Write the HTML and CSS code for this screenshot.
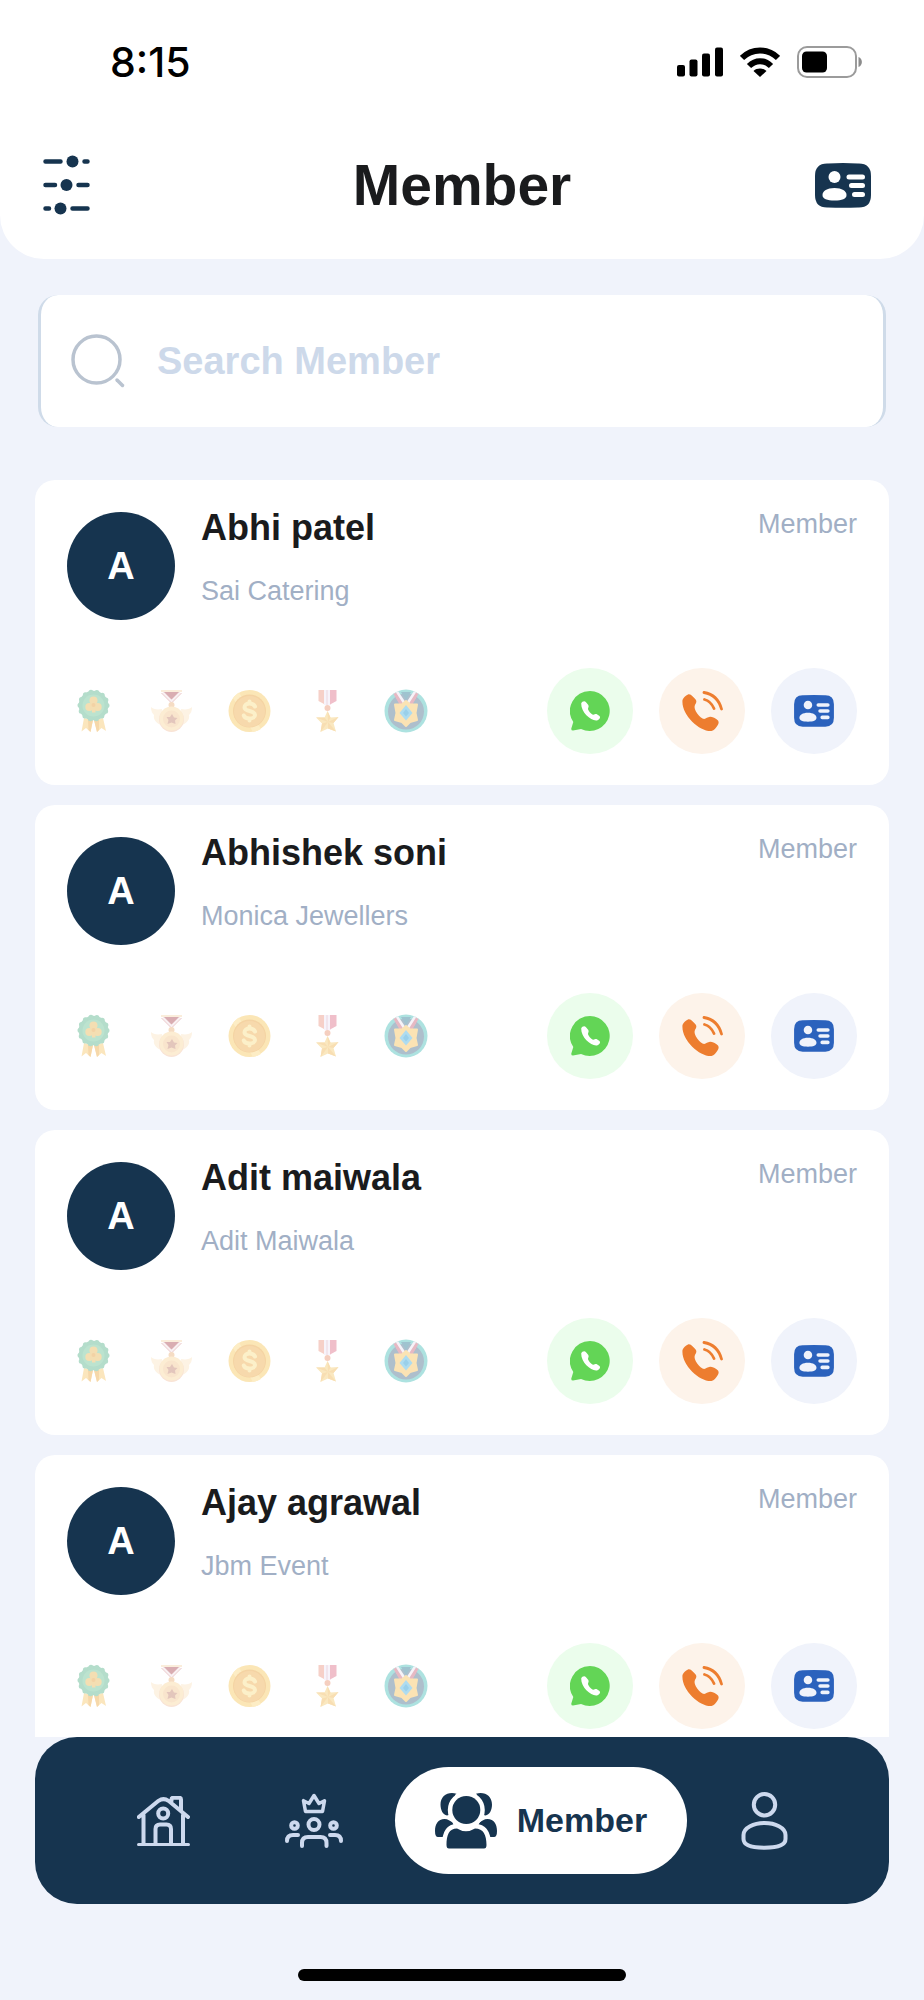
FILE: index.html
```html
<!DOCTYPE html>
<html lang="en">
<head>
<meta charset="utf-8">
<meta name="viewport" content="width=device-width, initial-scale=1">
<title>Member</title>
<link rel="stylesheet" href="styles.css">
</head>
<body>
<svg class="sprite" aria-hidden="true">
  <symbol id="id-card" viewBox="0 0 56 45">
    <path fill="currentColor" d="M13 0.500Q28 -0.500 43 0.500Q56 0 56 13V32Q56 45 43 44.500Q28 45 13 44.500Q0 45 0 32V13Q0 0 13 0.500Z"/>
    <circle class="cut" cx="19.500" cy="14" r="6"/>
    <path class="cut" d="M19.500 25C27 25 31.500 28 31.500 32S27 37.500 19.500 37.500S7.500 36 7.500 32S12 25 19.500 25Z"/>
    <path class="cut-line" d="M34 14H47.500M36.500 22.500H47.500M39.500 31.500H47.500"/>
  </symbol>
  <symbol id="badge-clover" viewBox="0 0 44 44">
    <path fill="#fbe6bd" d="M12 29L9.500 42.500L14 39L18.500 43L21 31ZM31 29L34 42L29.500 39L25 43L22 31Z"/>
    <path fill="#f6d8aa" d="M16 31L21 31L18.500 43L16.500 41ZM27 31L22 31L25 43L27 41Z"/>
    <circle cx="21.500" cy="16.500" r="14.800" fill="#b4ddcb"/>
    <circle cx="21.500" cy="16.500" r="13.500" fill="none" stroke="#b4ddcb" stroke-width="5" stroke-linecap="round" stroke-dasharray="0 6.059"/>
    <circle cx="21.500" cy="16.500" r="11" fill="#bce3cf"/>
    <g fill="#f4deb2"><circle cx="21.500" cy="11.500" r="4"/><circle cx="17.300" cy="18" r="4"/><circle cx="25.700" cy="18" r="4"/><path d="M20 14H23L23.500 23.500H20Z"/></g>
    <circle cx="21.500" cy="16" r="2" fill="#f3d2a5"/>
  </symbol>
  <symbol id="badge-wings" viewBox="0 0 44 44">
    <path fill="#fdf3e4" d="M12 20C7 21 3 20 1 18C1 22 2 24 4 26C3 30 6 34 11 36ZM31 20C36 21 40 20 42 18C42 22 41 24 39 26C40 30 37 34 32 36Z"/>
    <path fill="#faeddb" d="M11 1H32V3H11Z"/>
    <path fill="#d9adb2" d="M13 3H30L21.500 13Z"/>
    <path fill="none" stroke="#f9f1f3" stroke-width="2" d="M13 3.500L21.500 12L30 3.500"/>
    <path fill="none" stroke="#e9c6c8" stroke-width="1" d="M11.500 4L21.500 14L31.500 4"/>
    <circle cx="21.500" cy="16" r="3" fill="#f5dcc4"/>
    <circle cx="21.500" cy="30.500" r="12.500" fill="#f9e4d6"/>
    <circle cx="21.500" cy="29.500" r="12" fill="#fcedd3"/>
    <circle cx="21.500" cy="30" r="8.500" fill="#f9e5cd"/>
    <path fill="#e3c6bc" d="M22 25L24 28.500L27.500 29L25 31.500L25.500 35L21.500 33.500L17.500 35L18.500 31L16.500 28L20 28Z"/>
  </symbol>
  <symbol id="badge-coin" viewBox="0 0 44 44">
    <circle cx="21.500" cy="22" r="21" fill="#fbe6b6"/>
    <path fill="#fdedc5" d="M5 9A21 21 0 0 1 11 3.500L33 40A21 21 0 0 1 25 43Z"/>
    <circle cx="21.500" cy="22" r="16.500" fill="#f4d3a3"/>
    <circle cx="21.500" cy="22.500" r="15.500" fill="#f7d9ac"/>
    <path fill="none" stroke="#fcf0c9" stroke-width="4" stroke-linecap="round" stroke-linejoin="round" d="M27 17.500C26 15.500 24 14.500 21.500 14.500C18.500 14.500 16.500 16 16.500 18.200C16.500 20.500 18.500 21.300 21.500 22C24.500 22.700 27 23.500 27 26C27 28.300 24.500 29.500 21.500 29.500C18.500 29.500 16.500 28.500 15.800 26.500M21.500 12.500V14M21.500 30V31.500"/>
  </symbol>
  <symbol id="badge-star" viewBox="0 0 44 44">
    <path fill="#f6d0c8" d="M12.500 1H18V15L12.500 12Z"/>
    <path fill="#f7f3fa" d="M18 1H25V16H18Z"/>
    <path fill="#f0bfca" d="M24 1H30.500V12L24 15.500Z"/>
    <path fill="#ecd8e0" d="M20.500 1H21.500V16H20.500Z"/>
    <circle cx="21.500" cy="19" r="3" fill="#f5cfc0"/>
    <path fill="#fae8c0" d="M21.500 22L24.500 28.500L32.500 28L27.500 34L30 42.500L22 39.500L14.500 43L16 34.500L10 28.500L18.500 28.500Z"/>
    <path fill="#f8deb2" d="M21.500 22L24.500 28.500L22 33ZM32.500 28L27.500 34L22 33ZM30 42.500L22 39.500V33ZM14.500 43L16 34.500L22 33ZM10 28.500L18.500 28.500L22 33Z"/>
  </symbol>
  <symbol id="badge-gem" viewBox="0 0 44 44">
    <circle cx="22" cy="22" r="21.500" fill="#ade2e0"/>
    <circle cx="22" cy="22.500" r="18" fill="#aebfcc"/>
    <path fill="#f6f3f8" d="M10 5L14 2L22 14L18 18ZM34 5L30 2L22 14L26 18Z"/>
    <path fill="#e6b9c3" d="M9.500 5L12 3.500L20 16L17 18ZM34.500 5L32 3.500L24 16L27 18Z"/>
    <path fill="#9fc3cf" d="M17 3H27L22 11Z"/>
    <path fill="#fbe3b4" stroke="#fbe3b4" stroke-width="2" stroke-linejoin="round" d="M22 12L26 15.500L33 15.500L31.500 24L33 31L26 33L22 37L18 33L11 31L12.500 24L11 15.500L18 15.500Z"/>
    <path fill="#aedcf0" d="M22 16L28.500 24L22 31.500L15.500 24Z"/>
    <path fill="#9ad0ea" d="M22 20L25 24L22 27.500L19 24Z"/>
  </symbol>
  <symbol id="whatsapp" viewBox="0 0 40 40">
    <path fill="#63d556" d="M20 0A20 20 0 1 1 11 38L3 39.500Q1 39.500 1.300 37.500L3.300 31A20 20 0 0 1 20 0Z"/>
    <path fill="#fff" d="M11.200 12.500C12 10.500 14.500 9.500 16 11.200L18.300 14C19.300 15.800 17.800 16.800 18 18.300C18.800 20.500 20.500 22.300 22.500 23.500C24 24.200 25 22.800 26.500 23L29.500 25C31 26.800 29 28.500 27.500 29.200C22 30.800 11 22 11.200 12.500Z"/>
  </symbol>
  <symbol id="phone" viewBox="0 0 41 41">
    <path fill="#ed7d2f" d="M0.500 9C1.500 6.500 3.500 4.500 6 3.500C8 3 9 4 10.500 5.200L13 7.700C15 9.700 14.500 11.500 13.300 13.300C12 15.500 12.500 18 13.800 20.300C15.500 23.500 18 26 20.500 27.500C23.500 29 25 26 28 25.800C30 25.700 34 27.500 36 29.500C37 30.800 36.800 33 35.500 34.500C34 37 32 39.500 29.500 40C18 41 -1 24 0.500 9Z"/>
    <path fill="none" stroke="#ed7d2f" stroke-width="2.800" stroke-linecap="round" d="M22 1.500C31 3 37 9 39.500 18M22.500 8.500C27 9.500 30 13 32 17.500"/>
  </symbol>
</svg>

<div class="app">
  <header class="header">
    <div class="status">
      <time class="clock">8:15</time>
      <div class="status-icons">
        <svg width="46" height="30" viewBox="0 0 46 30" aria-hidden="true"><rect x="0" y="18" width="8" height="11.500" rx="2"/><rect x="12.500" y="12.500" width="8" height="17" rx="2"/><rect x="25" y="6.500" width="8" height="23" rx="2"/><rect x="38" y="0.500" width="8" height="29" rx="2"/></svg>
        <svg width="40" height="30" viewBox="0 0 40 30" aria-hidden="true"><g fill="none" stroke="#000" stroke-width="6"><path d="M2 11C12 1 28 1 38 11"/><path d="M9 19C15.500 12.500 24.500 12.500 31 19"/></g><path d="M13.500 24C17 20.800 23 20.800 26.500 24L20 30Z"/></svg>
        <svg width="66" height="32" viewBox="0 0 66 32" aria-hidden="true"><rect x="1" y="1" width="58" height="30" rx="9" fill="none" stroke="#9b9b9b" stroke-width="2"/><rect x="5" y="5.500" width="25" height="21" rx="4.500"/><path fill="#8c8c8c" d="M61.500 11C66 12.500 66 19.500 61.500 21Z"/></svg>
      </div>
    </div>
    <div class="titlebar">
      <button class="icon-btn" type="button" aria-label="Filters">
        <svg width="47" height="60" viewBox="0 0 47 60"><g fill="currentColor"><circle cx="29.500" cy="6.500" r="6"/><circle cx="23.500" cy="30" r="6"/><circle cx="17.500" cy="53.500" r="6"/></g><path fill="none" stroke="currentColor" stroke-width="4.500" stroke-linecap="round" d="M2.500 6.500H17.500M41.500 6.500H44.500M2.500 30H12M35.500 30H44.500M2.500 53.500H6M29.500 53.500H44.500"/></svg>
      </button>
      <h1 class="title">Member</h1>
      <button class="icon-btn" type="button" aria-label="My card">
        <svg width="56" height="45"><use href="#id-card"/></svg>
      </button>
    </div>
  </header>

  <label class="search">
    <svg width="54" height="54" viewBox="0 0 54 54" aria-hidden="true"><g fill="none" stroke="#b9c3d0" stroke-linecap="round"><circle cx="25.500" cy="25.500" r="23.500" stroke-width="3.500"/><path stroke-width="3.500" d="M46 46L51.500 51.500"/></g></svg>
    <input type="search" placeholder="Search Member" aria-label="Search Member">
  </label>

  <main class="list">
    <article class="card">
      <div class="card-top">
        <div class="avatar">A</div>
        <div class="who"><h2 class="name">Abhi patel</h2><p class="company">Sai Catering</p></div>
        <span class="role">Member</span>
      </div>
      <div class="card-bottom">
        <div class="badges"><svg><use href="#badge-clover"/></svg><svg><use href="#badge-wings"/></svg><svg><use href="#badge-coin"/></svg><svg><use href="#badge-star"/></svg><svg><use href="#badge-gem"/></svg></div>
        <div class="actions">
          <button class="action chat" type="button" aria-label="WhatsApp"><svg width="40" height="40"><use href="#whatsapp"/></svg></button>
          <button class="action call" type="button" aria-label="Call"><svg width="41" height="41"><use href="#phone"/></svg></button>
          <button class="action view" type="button" aria-label="View card"><svg width="40" height="32"><use href="#id-card"/></svg></button>
        </div>
      </div>
    </article>
    <article class="card">
      <div class="card-top">
        <div class="avatar">A</div>
        <div class="who"><h2 class="name">Abhishek soni</h2><p class="company">Monica Jewellers</p></div>
        <span class="role">Member</span>
      </div>
      <div class="card-bottom">
        <div class="badges"><svg><use href="#badge-clover"/></svg><svg><use href="#badge-wings"/></svg><svg><use href="#badge-coin"/></svg><svg><use href="#badge-star"/></svg><svg><use href="#badge-gem"/></svg></div>
        <div class="actions">
          <button class="action chat" type="button" aria-label="WhatsApp"><svg width="40" height="40"><use href="#whatsapp"/></svg></button>
          <button class="action call" type="button" aria-label="Call"><svg width="41" height="41"><use href="#phone"/></svg></button>
          <button class="action view" type="button" aria-label="View card"><svg width="40" height="32"><use href="#id-card"/></svg></button>
        </div>
      </div>
    </article>
    <article class="card">
      <div class="card-top">
        <div class="avatar">A</div>
        <div class="who"><h2 class="name">Adit maiwala</h2><p class="company">Adit Maiwala</p></div>
        <span class="role">Member</span>
      </div>
      <div class="card-bottom">
        <div class="badges"><svg><use href="#badge-clover"/></svg><svg><use href="#badge-wings"/></svg><svg><use href="#badge-coin"/></svg><svg><use href="#badge-star"/></svg><svg><use href="#badge-gem"/></svg></div>
        <div class="actions">
          <button class="action chat" type="button" aria-label="WhatsApp"><svg width="40" height="40"><use href="#whatsapp"/></svg></button>
          <button class="action call" type="button" aria-label="Call"><svg width="41" height="41"><use href="#phone"/></svg></button>
          <button class="action view" type="button" aria-label="View card"><svg width="40" height="32"><use href="#id-card"/></svg></button>
        </div>
      </div>
    </article>
    <article class="card">
      <div class="card-top">
        <div class="avatar">A</div>
        <div class="who"><h2 class="name">Ajay agrawal</h2><p class="company">Jbm Event</p></div>
        <span class="role">Member</span>
      </div>
      <div class="card-bottom">
        <div class="badges"><svg><use href="#badge-clover"/></svg><svg><use href="#badge-wings"/></svg><svg><use href="#badge-coin"/></svg><svg><use href="#badge-star"/></svg><svg><use href="#badge-gem"/></svg></div>
        <div class="actions">
          <button class="action chat" type="button" aria-label="WhatsApp"><svg width="40" height="40"><use href="#whatsapp"/></svg></button>
          <button class="action call" type="button" aria-label="Call"><svg width="41" height="41"><use href="#phone"/></svg></button>
          <button class="action view" type="button" aria-label="View card"><svg width="40" height="32"><use href="#id-card"/></svg></button>
        </div>
      </div>
    </article>
  </main>

  <nav class="nav">
    <a class="nav-item" href="#home" aria-label="Home">
      <svg width="53" height="50" viewBox="0 0 53 50"><g fill="none" stroke="currentColor" stroke-width="4" stroke-linecap="round" stroke-linejoin="round"><path stroke-width="3" d="M1.500 48.500H51.500"/><path d="M6.500 19V48M46 19V48M1.800 21L21.500 4.800Q26.500 1.500 31.500 4.800L51 21M34.500 5V3.500Q34.500 1.700 36.500 1.700H42Q44 1.700 44 3.500V14M18.500 48V33Q18.500 28.500 23 28.500H29.500Q34 28.500 34 33V48"/><circle cx="26.200" cy="17.500" r="5"/></g></svg>
    </a>
    <a class="nav-item" href="#leaders" aria-label="Leaders">
      <svg width="58" height="55" viewBox="0 0 58 55"><g fill="none" stroke="currentColor" stroke-width="4" stroke-linecap="round" stroke-linejoin="round"><path stroke-width="3.500" d="M18.500 7.700L20.500 18.500H37.500L39.500 7.700L34 10.500L29 2.500L24 10.500Z"/><circle cx="29" cy="31.500" r="5.500"/><circle cx="9.500" cy="32.500" r="3.300"/><circle cx="48.500" cy="32.500" r="3.300"/><path d="M17 53V50Q17 44 23 44H35.500Q41.500 44 41.500 50V53M13 42H8Q2 42 2 48M45 42H50Q56 42 56 48"/></g></svg>
    </a>
    <a class="nav-item active" href="#members" aria-current="page">
      <svg width="62" height="56" viewBox="0 0 62 56" aria-hidden="true"><g fill="currentColor"><path d="M21.500 0.800C13 -1.800 5.500 3 5.500 11.500C5.500 17 8 22 12 22.500L20 20V2ZM41 0.800C49.500 -1.800 57 3 57 11.500C57 17 54.500 22 50.500 22.500L42 20V2Z"/><path d="M0 38C0 31 3 26 9.500 26C13 26 15 28 17.500 29.500L24 44H3Q0 44 0 38ZM62 38C62 31 59 26 52.500 26C49 26 47 28 44.500 29.500L38 44H59Q62 44 62 38Z"/><path class="halo" d="M11.500 52C11.500 42 14 35.500 22 35.500Q31 41 40 35.500C48.500 35.500 51.500 42 51.500 52Q51.500 55.500 49 55.500H14Q11.500 55.500 11.500 52Z"/><circle class="halo" cx="31.300" cy="17" r="14"/></g></svg>
      <span>Member</span>
    </a>
    <a class="nav-item" href="#profile" aria-label="Profile">
      <svg width="47" height="58" viewBox="0 0 47 58"><g fill="none" stroke="currentColor" stroke-width="4"><circle cx="23.500" cy="12.700" r="10.700"/><path d="M23.500 31C34 31 44.500 35.500 44.500 43V47C44.500 54 35 55.700 23.500 55.700S2.500 54 2.500 47V43C2.500 35.500 13 31 23.500 31Z"/></g></svg>
    </a>
  </nav>
  <div class="home-bar"></div>
</div>
</body>
</html>
```

FILE: styles.css
```css
* { box-sizing: border-box; }

body {
  margin: 0;
  background: #f0f3fb;
  color: #1a1b1d;
  font-family: "Liberation Sans", Arial, sans-serif;
}

h1, h2, p { margin: 0; }

button {
  padding: 0;
  border: 0;
  background: none;
  color: inherit;
  cursor: pointer;
}

svg { display: block; flex: none; }

.sprite { position: absolute; width: 0; height: 0; }

.app {
  display: flex;
  flex-direction: column;
  height: 100vh;
}

/* Header */
.header {
  flex: none;
  padding: 41px 53px 44px 43px;
  background: #fff;
  border-radius: 0 0 44px 44px;
}

.status {
  display: flex;
  align-items: center;
  justify-content: space-between;
  height: 42px;
  padding: 0 8px 0 67px;
}

.clock {
  color: #000;
  font-family: Inter, "Liberation Sans", sans-serif;
  font-size: 41px;
  font-weight: 500;
  line-height: 42px;
}

.status-icons { display: flex; align-items: center; gap: 17px; }

.titlebar {
  display: grid;
  grid-template-columns: 66px 1fr 56px;
  align-items: center;
  margin-top: 72px;
  color: #16344f;
}

.title {
  color: #1a1b1d;
  font-size: 57px;
  line-height: 60px;
  text-align: center;
}

.cut { fill: var(--cut, #fff); }

.cut-line {
  fill: none;
  stroke: var(--cut, #fff);
  stroke-width: 5;
  stroke-linecap: round;
}

/* Search */
.search {
  display: flex;
  flex: none;
  align-items: center;
  gap: 32px;
  height: 132px;
  margin: 36px 38px 53px;
  padding: 0 30px;
  background: #fff;
  border: solid #cfdbe9;
  border-width: 0 3px;
  border-radius: 20px;
}

.search input {
  flex: 1;
  min-width: 0;
  padding: 0;
  border: 0;
  outline: 0;
  background: none;
  color: #16344f;
  font: bold 38px "Liberation Sans", Arial, sans-serif;
}

.search input::placeholder { color: #cdd9ea; opacity: 1; }

/* Member list */
.list {
  display: flex;
  flex: 1;
  flex-direction: column;
  gap: 20px;
  min-height: 0;
  padding: 0 35px;
  overflow: hidden;
}

.card {
  display: flex;
  flex: none;
  flex-direction: column;
  gap: 48px;
  padding: 32px 32px 31px;
  background: #fff;
  border-radius: 20px;
}

.card-top { display: flex; align-items: flex-start; }

.avatar {
  display: grid;
  flex: none;
  place-items: center;
  width: 108px;
  height: 108px;
  margin-right: 26px;
  background: #16344f;
  border-radius: 50%;
  color: #fff;
  font-size: 38px;
  font-weight: bold;
}

.who { flex: 1; min-width: 0; }

.name { font-size: 36px; line-height: 32px; }

.company {
  margin-top: 31px;
  color: #a1afc5;
  font-size: 27px;
  line-height: 32px;
}

.role { color: #a1afc5; font-size: 27px; line-height: 24px; }

.card-bottom {
  display: flex;
  align-items: center;
  justify-content: space-between;
}

.badges { display: flex; gap: 34px; padding-left: 5px; }

.badges svg { width: 44px; height: 44px; }

.actions { display: flex; gap: 26px; }

.action {
  display: grid;
  place-items: center;
  width: 86px;
  height: 86px;
  border-radius: 50%;
}

.chat { background: #ebfdec; }
.call { background: #fdf3ea; }
.view { background: #f0f3fb; color: #2b62bd; --cut: #f0f3fb; }

/* Bottom navigation */
.nav {
  display: flex;
  flex: none;
  align-items: center;
  margin: 0 35px 65px;
  padding: 30px 50px 30px 54px;
  background: #16344f;
  border-radius: 42px;
}

.nav-item {
  display: flex;
  flex: 1;
  align-items: center;
  justify-content: center;
  color: #cdd9ee;
  text-decoration: none;
}

.nav-item.active {
  flex: none;
  gap: 20px;
  height: 107px;
  margin: 0 2px 0 6px;
  padding: 0 40px;
  background: #fff;
  border-radius: 54px;
  color: #16344f;
  font-size: 34px;
  font-weight: bold;
}

.halo { stroke: #fff; stroke-width: 9; paint-order: stroke; }

.home-bar {
  flex: none;
  align-self: center;
  width: 328px;
  height: 12px;
  margin-bottom: 19px;
  background: #000;
  border-radius: 6px;
}
```
